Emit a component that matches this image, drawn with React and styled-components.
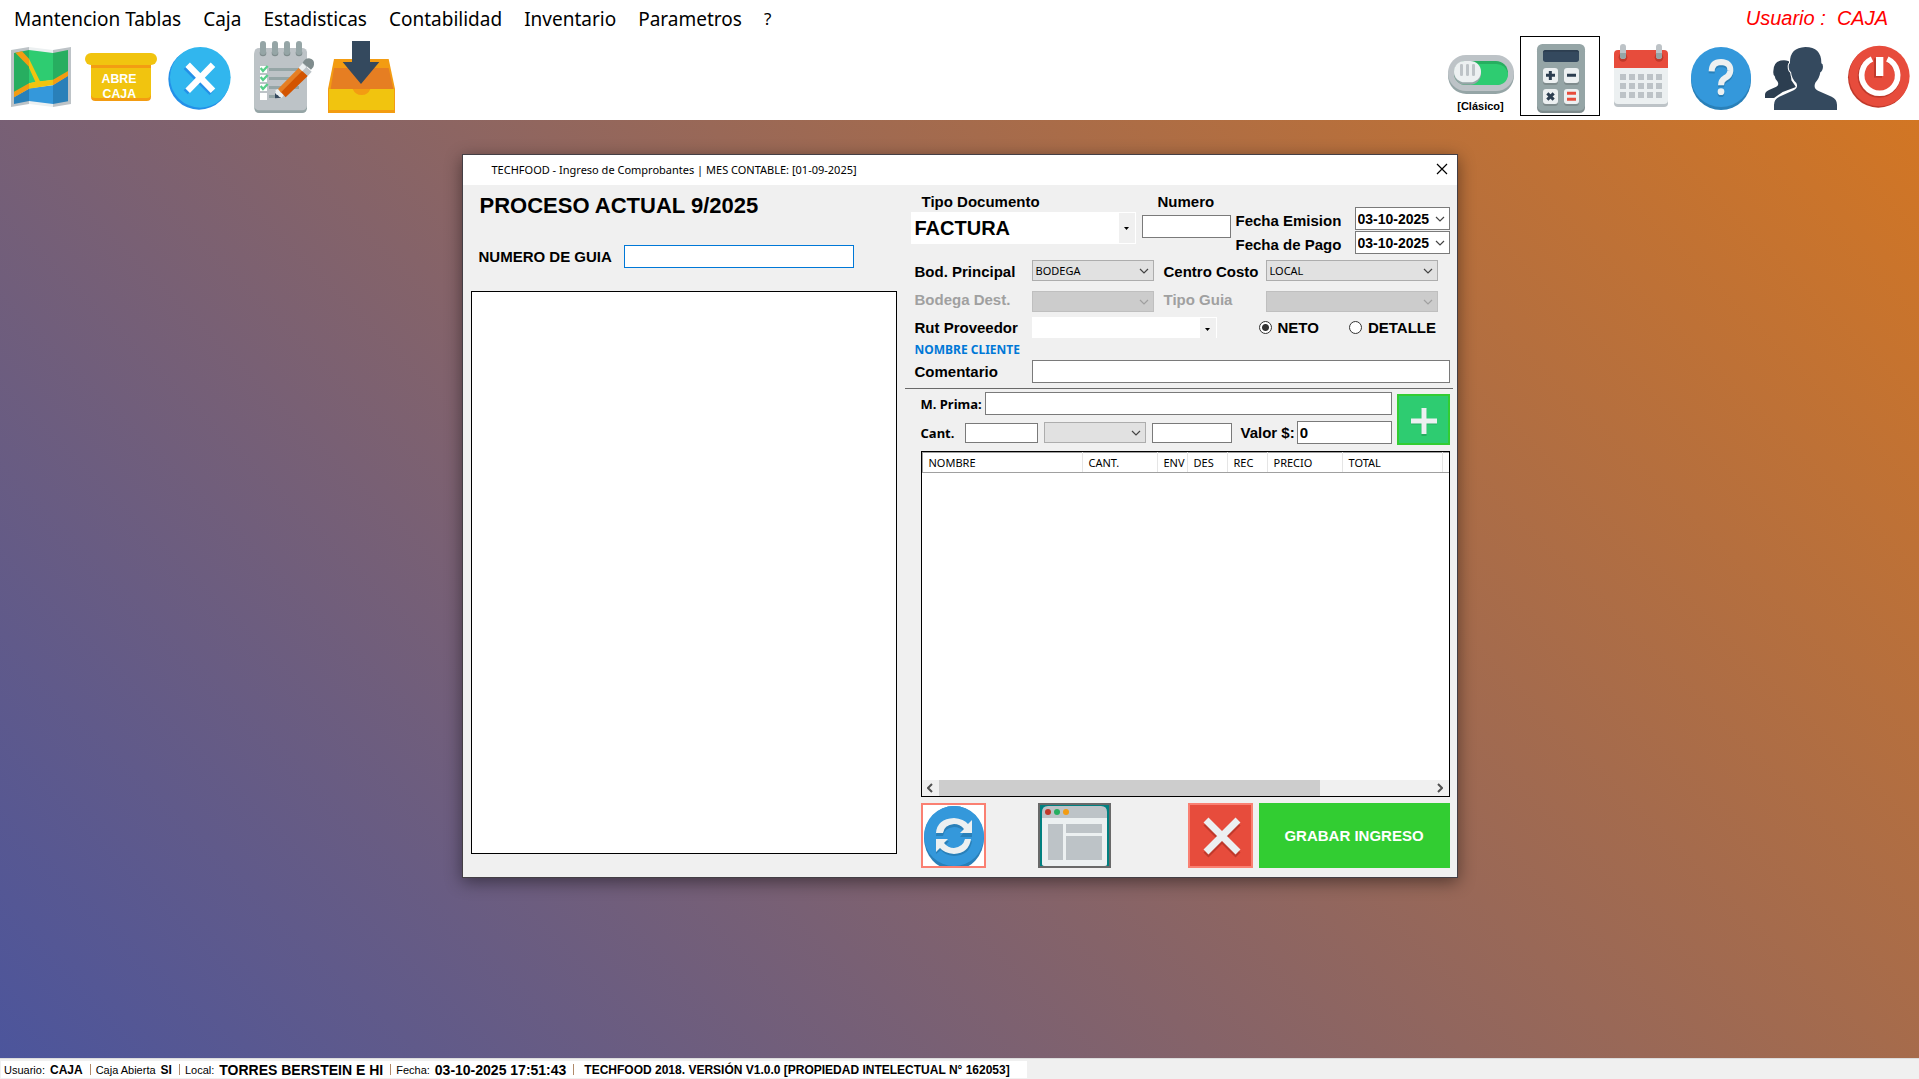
import React, {useState} from 'react';
import styled, {createGlobalStyle} from 'styled-components';

const GlobalStyle = createGlobalStyle`
  * {
    box-sizing: border-box;
  }

  html, body, #root {
    height: 100%;
    margin: 0;
  }

  body {
    font-family: 'Liberation Sans', Arial, sans-serif;
    font-size: 15px;
    color: #000;
  }

  button, input, select {
    font: inherit;
    color: inherit;
    margin: 0;
    padding: 0;
    border-radius: 0;
  }
`;

const tahoma = `'Noto Sans', Tahoma, sans-serif`;

const Page = styled.div`
  min-height: 100%;
  display: flex;
  flex-direction: column;
`;

const Header = styled.header`
  background: #fff;
  height: 120px;
`;

const MenuBar = styled.div`
  display: flex;
  justify-content: space-between;
  height: 36px;
  padding: 0 31px 0 14px;
`;

const Menu = styled.nav`
  display: flex;
  gap: 22px;
`;

const MenuItem = styled.button`
  border: 0;
  background: none;
  font-family: ${tahoma};
  font-size: ${props => (props.$small ? 17 : 19)}px;
  line-height: 36px;
  height: 38px;
`;

const CurrentUser = styled.span`
  color: #f00;
  font-size: 20px;
  font-style: italic;
  line-height: 36px;
  white-space: pre;
`;

const ToolBar = styled.div`
  display: flex;
  justify-content: space-between;
  padding-left: 8px;
`;

const ToolGroup = styled.div`
  display: flex;
`;

const Tool = styled.button`
  display: flex;
  flex-direction: column;
  align-items: center;
  justify-content: center;
  height: 80px;
  border: ${props => (props.$framed ? '1px solid #000' : '0')};
  background: none;
  font-size: 11px;
  font-weight: bold;
  line-height: 20px;

  & svg {
    display: block;
  }
`;

const Desktop = styled.main`
  flex: 1;
  display: flex;
  justify-content: center;
  align-items: flex-start;
  padding: 34px 16px;
  background: linear-gradient(45deg, #4c559c, #d27624);
`;

const Dialog = styled.section`
  width: 996px;
  max-width: 100%;
  background: #f0f0f0;
  border: 1px solid #443f45;
  box-shadow: 0 4px 16px rgba(0, 0, 0, 0.45);
`;

const TitleBar = styled.div`
  display: flex;
  justify-content: space-between;
  align-items: center;
  height: 30px;
  padding: 0 8px 2px 29px;
  background: #fff;
  font-family: ${tahoma};
  font-size: 11px;
`;

const CloseButton = styled.button`
  display: flex;
  border: 0;
  background: none;
`;

const DialogBody = styled.form`
  display: flex;
  gap: 8px;
  padding: 0 4px 0 8px;
`;

const LeftSide = styled.div`
  flex: 1;
  display: flex;
  flex-direction: column;
  padding-bottom: 23px;
`;

const Heading = styled.h1`
  margin: 8px 0 0 9px;
  font-size: 22px;
  line-height: 26px;
`;

const GuideRow = styled.div`
  display: flex;
  align-items: center;
  gap: 12px;
  margin: 26px 0 23px 8px;
`;

const GuideList = styled.div`
  flex: 1;
  border: 1px solid #000;
  background: #fff;
`;

const RightSide = styled.div`
  flex: 0 0 548px;
  min-width: 0;
`;

const Label = styled.label`
  font-size: 15px;
  font-weight: bold;
  line-height: 18px;
  white-space: nowrap;
  color: ${props => (props.$muted ? '#a0a0a0' : '#000')};
`;

const SmallLabel = styled(Label)`
  font-family: ${tahoma};
  font-size: 13px;
`;

const TextBox = styled.input`
  width: ${props => (props.$width ? `${props.$width}px` : '0')};
  flex: ${props => (props.$width ? 'none' : '1')};
  min-width: 0;
  height: ${props => (props.$low ? 20 : 23)}px;
  border: 1px solid ${props => (props.$active ? '#0078d7' : '#7a7a7a')};
  padding: 0 2px;
  background: #fff;
  font-weight: bold;
  outline: none;
`;

const DocumentRow = styled.div`
  display: flex;
  padding: 8px 3px 0 6px;
`;

const Field = styled.div`
  display: flex;
  flex-direction: column;
  align-items: flex-start;
  gap: ${props => props.$gap}px;
  margin-right: ${props => props.$space}px;

  & ${Label} {
    padding-left: ${props => props.$indent}px;
  }

  & ${TextBox} {
    flex: none;
  }
`;

const Dates = styled.div`
  flex: 1;
  display: grid;
  grid-template-columns: 1fr 95px;
  grid-auto-rows: 23px;
  row-gap: 1px;
  align-items: end;
  justify-items: start;
  padding-top: 14px;
`;

const DateBox = styled.div`
  display: flex;
  align-items: center;
  width: 95px;
  height: 23px;
  padding-left: 2px;
  border: 1px solid #7a7a7a;
  background: #fff;

  & input {
    width: 76px;
    height: 20px;
    border: 0;
    background: none;
    font-size: 14px;
    font-weight: bold;
    outline: none;
  }

  & button {
    display: flex;
    border: 0;
    background: none;
    color: #444;
  }
`;

const SelectBox = styled.div`
  display: grid;
  align-items: center;
  width: ${props => props.$width}px;
  height: 21px;
  border: 1px solid ${props => (props.$off ? '#bfbfbf' : '#adadad')};
  background: ${props => (props.$off ? '#ccc' : '#e1e1e1')};
  color: ${props => (props.$off ? '#a0a0a0' : '#444')};

  & > * {
    grid-area: 1 / 1;
  }

  & select {
    appearance: none;
    width: 100%;
    height: 19px;
    padding-left: 3px;
    border: 0;
    background: none;
    color: #000;
    font-family: ${tahoma};
    font-size: 11px;
    outline: none;
  }

  & svg {
    justify-self: end;
    margin-right: 3px;
    pointer-events: none;
  }
`;

const FlatSelect = styled.div`
  display: grid;
  grid-template-columns: 1fr 16px;
  width: ${props => props.$width}px;
  height: ${props => (props.$large ? 32 : 21)}px;
  padding: 1px;
  background: #fff;

  & select {
    grid-area: 1 / 1 / 2 / 3;
    appearance: none;
    padding-left: 3px;
    border: 0;
    background: none;
    font-size: 20px;
    font-weight: bold;
    outline: none;
  }

  & span {
    grid-area: 1 / 2;
    display: flex;
    align-items: center;
    justify-content: center;
    background: #f0f0f0;
    pointer-events: none;
  }
`;

const FieldGrid = styled.div`
  display: flex;
  flex-direction: column;
  padding: 6px 3px 5px 10px;
`;

const GridRow = styled.div`
  display: grid;
  grid-template-columns: 117px 132px 102px 1fr;
  align-items: ${props => props.$align || 'center'};
  margin-bottom: ${props => props.$space || 0}px;
`;

const SupplierRow = styled.div`
  display: flex;
  align-items: center;

  & > ${Label}:first-child {
    width: 117px;
  }
`;

const Radios = styled.div`
  display: flex;
  gap: 30px;
  margin-left: 42px;
`;

const RadioLabel = styled(Label)`
  display: flex;
  align-items: center;
  gap: 6px;

  & input {
    appearance: none;
    width: 13px;
    height: 13px;
    border: 1px solid #333;
    border-radius: 50%;
    background: #fff;
  }

  & input:checked {
    background: radial-gradient(circle, #333 0 3px, #fff 4px);
  }
`;

const ClientName = styled.div`
  height: 22px;
  color: #0078d7;
  font-family: ${tahoma};
  font-size: 12px;
  font-weight: bold;
  line-height: 24px;
`;

const Divider = styled.hr`
  height: 1px;
  margin: 0;
  border: 0;
  background: #696969;
`;

const Details = styled.div`
  padding: 3px 3px 9px 16px;
`;

const EntryArea = styled.div`
  display: flex;
  align-items: flex-start;
  gap: 5px;
  margin-bottom: 6px;
`;

const EntryRows = styled.div`
  flex: 1;
  display: flex;
  flex-direction: column;
  gap: 6px;
  min-width: 0;
`;

const EntryRow = styled.div`
  display: flex;
  align-items: center;
  gap: ${props => props.$gap}px;
`;

const PriceField = styled.div`
  flex: 1;
  display: flex;
  align-items: center;
  gap: 2px;
  min-width: 0;
  padding-left: 3px;
`;

const ItemLabel = styled(SmallLabel)`
  width: ${props => props.$width}px;
`;

const AddButton = styled.button`
  display: flex;
  width: 53px;
  height: 51px;
  margin-top: 2px;
  border: 2px solid #32cd32;
  background: #2ecc71;
`;

const ItemList = styled.div`
  display: flex;
  flex-direction: column;
  height: 346px;
  border: 1px solid #000;
  background: #fff;
`;

const ItemTable = styled.table`
  width: 100%;
  table-layout: fixed;
  border-collapse: collapse;
  border-top: 1px solid #a0a0a0;
  border-left: 1px solid #a0a0a0;
  font-family: ${tahoma};
  font-size: 11px;

  & th {
    height: 20px;
    padding: 0 0 0 6px;
    border-right: 1px solid #e5e5e5;
    border-bottom: 1px solid #a0a0a0;
    font-weight: normal;
    text-align: left;
    white-space: nowrap;
  }

  & th:last-child {
    padding: 0;
    border-right: 0;
  }
`;

const ScrollBar = styled.div`
  display: grid;
  grid-template-columns: 17px 381px 1fr 17px;
  height: 16px;
  margin-top: auto;
  background: #f0f0f0;

  & button {
    display: flex;
    align-items: center;
    justify-content: center;
    border: 0;
    background: none;
  }
`;

const ScrollThumb = styled.div`
  background: #cdcdcd;
`;

const ScrollTrack = styled.div`
  background: #f0f0f0;
`;

const Actions = styled.div`
  display: flex;
  justify-content: space-between;
  margin-top: 6px;
`;

const ActionPair = styled.div`
  display: flex;
  gap: ${props => props.$gap}px;
`;

const ActionButton = styled.button`
  display: flex;
  width: ${props => props.$width}px;
  height: 65px;
  border: 2px solid ${props => props.$line};
  background: ${props => props.$fill};
`;

const SaveButton = styled.button`
  width: 191px;
  height: 65px;
  border: 0;
  background: #32cd32;
  color: #fff;
  font-weight: bold;
`;

const StatusBar = styled.footer`
  height: 21px;
  padding: 2px 0 1px 1px;
  border-top: 1px solid #dcdcdc;
  background: #f0f0f0;
`;

const StatusText = styled.div`
  display: flex;
  width: max-content;
  height: 17px;
  padding: 0 10px 0 3px;
  background: #fff;
  font-size: 11px;
  line-height: 18px;
  white-space: pre;
`;

const StatusValue = styled.strong`
  padding: 0 7px 0 5px;
  font-size: ${props => (props.$small ? 12 : 14)}px;
`;

const StatusMark = styled.span`
  width: 1px;
  height: 11px;
  margin: 3px 5px 0 0;
  background: #b08a6a;
`;

const Chevron = () => (
  <svg width="12" height="8" viewBox="0 0 12 8" fill="none" stroke="currentColor" strokeWidth="1.2">
    <path d="M2 2l4 4 4-4" />
  </svg>
);

const Caret = () => (
  <svg width="5" height="3" viewBox="0 0 5 3">
    <path d="M0 0h5L2.5 3z" />
  </svg>
);

const MapIcon = () => (
  <svg width="70" height="80" viewBox="24 108 210 240">
    <path fill="#bdc3c7" d="M33 150l54-9v171l-54 9zM159 150l54-9v171l-54 9z" />
    <path fill="#ecf0f1" d="M87 141l72 9v171l-72-9z" />
    <path fill="#27ae60" d="M42 159l45-9v114l-45 27zM159 159l45-9v66l-45 28z" />
    <path fill="#2ecc71" d="M87 150l72 9v81l-72 10z" />
    <path fill="#2980b9" d="M42 292l45-26v37l-45 9zM159 255l45-28v77l-45 8z" />
    <path fill="#3498db" d="M87 265l72-9v56l-72-9z" />
    <path fill="#f39c12" d="M46 158l20-4 21 22v24zM42 275l45-25v16l-45 26zM159 239l45-26v15l-45 28z" />
    <path fill="#f1c40f" d="M87 176l33 68 39-5v16l-72 11v-16l19-5-19-42z" />
  </svg>
);

const CashBoxIcon = () => (
  <svg width="84" height="80" viewBox="234 108 252 240">
    <path fill="#f39c12" d="M273 190h180v100q0 13-13 13H286q-13 0-13-13z" />
    <path fill="#f1c40f" d="M273 204h180v78q0 12-13 12H286q-13 0-13-12z" />
    <rect x="255" y="159" width="216" height="36" rx="18" fill="#f1c40f" />
    <g fill="#fff" fontFamily="Liberation Sans, Arial, sans-serif" fontWeight="bold" fontSize="37" textAnchor="middle">
      <text x="357" y="249">ABRE</text>
      <text x="358" y="294">CAJA</text>
    </g>
  </svg>
);

const CancelIcon = () => (
  <svg width="80" height="80" viewBox="486 108 240 240">
    <circle cx="597" cy="237" r="92" fill="#2490e8" />
    <circle cx="601" cy="232" r="91" fill="#31b6ee" />
    <path stroke="#2490e8" strokeWidth="17" d="M557 201l78 78M633 201l-76 76" />
    <path stroke="#fff" strokeWidth="19" d="M563 194l76 78M639 194l-76 78" />
  </svg>
);

const NotepadIcon = () => (
  <svg width="80" height="80" viewBox="726 108 240 240">
    <rect x="763" y="150" width="158" height="189" rx="14" fill="#95a5a6" />
    <rect x="763" y="144" width="158" height="187" rx="14" fill="#bdc3c7" />
    {[789, 825, 861, 897].map(x => (
      <g key={x}>
        <circle cx={x} cy="159" r="10" fill="#7f8c8d" />
        <rect x={x - 9} y="123" width="18" height="42" rx="9" fill="#95a5a6" />
      </g>
    ))}
    {[198, 225, 252, 279].map((y, i) => (
      <g key={y}>
        <rect x="780" y={y} width="21" height="21" fill="#fff" />
        {i < 3 && <path fill="none" stroke="#58cf89" strokeWidth="7" d={`M782 ${y + 6}l7 9 14-15`} />}
        <rect x="807" y={y + 6} width={i === 3 ? 24 : 90} height="9" fill="#95a5a6" />
      </g>
    ))}
    <path fill="#34495e" d="M825 273l20 20-20 2z" />
    <path fill="#ecf0f1" d="M827 270l9-4 17 17-8 11q-10-3-11-8-6-2-9-8z" />
    <path fill="#e67e22" d="M834 267l64-65 10 10-65 66z" />
    <path fill="#d35400" d="M843 277l65-66 16 16-67 65z" />
    <path fill="#bdc3c7" d="M896 203l12-13 27 25-12 13z" />
    <path fill="#ecf0f1" d="M896 203l12-13 11 11-12 13z" />
    <path fill="#7f8c8d" d="M908 188q7-13 19-13 17 2 15 19 0 8-9 15z" />
  </svg>
);

const InboxIcon = () => (
  <svg width="80" height="80" viewBox="966 108 240 240">
    <path fill="#f39c12" d="M1002 177h164l19 90v72H984v-72z" />
    <path fill="#e67e22" d="M1002 204h164l14 63H992z" />
    <path fill="#f1c40f" d="M987 267h71q8 18 27 18t26-18h71v63H987z" />
    <path fill="#34495e" d="M1056 123h54v63h28l-55 66-55-66h28z" />
  </svg>
);

const ToggleIcon = () => (
  <svg width="79" height="60" viewBox="63 108 237 180">
    <rect x="84" y="171" width="198" height="111" rx="55" fill="#95a5a6" />
    <rect x="84" y="165" width="198" height="108" rx="54" fill="#bdc3c7" />
    <rect x="102" y="183" width="162" height="72" rx="36" fill="#27ae60" />
    <path fill="#2ecc71" d="M150 192h80q26 2 34 27 0 36-36 36h-78z" />
    <rect x="102" y="188" width="81" height="66" rx="33" fill="#95a5a6" />
    <rect x="102" y="183" width="81" height="64" rx="32" fill="#ecf0f1" />
    {[120, 138, 156].map(x => (
      <rect key={x} x={x} y="192" width="9" height="36" rx="4" fill="#bdc3c7" />
    ))}
  </svg>
);

const CalculatorIcon = () => (
  <svg width="78" height="78" viewBox="303 111 234 234">
    <rect x="351" y="138" width="144" height="201" rx="16" fill="#7f8c8d" />
    <rect x="351" y="132" width="144" height="200" rx="16" fill="#95a5a6" />
    <rect x="369" y="150" width="108" height="36" rx="8" fill="#34495e" />
    <path fill="#2c3e50" d="M369 158q0-8 8-8h92q8 0 8 8-4-3-8-3h-92q-4 0-8 3z" />
    {[[369, 204], [432, 204], [369, 267], [432, 267]].map(([x, y]) => (
      <g key={`${x}-${y}`}>
        <rect x={x} y={y + 6} width="45" height="45" rx="9" fill="#7f8c8d" />
        <rect x={x} y={y} width="45" height="45" rx="9" fill="#ecf0f1" />
      </g>
    ))}
    <path stroke="#2c3e50" strokeWidth="9" d="M378 226h27M391 213v27M441 226h27M382 280l19 19M401 280l-19 19" />
    <path stroke="#e74c3c" strokeWidth="9" d="M441 280h27M441 298h27" />
  </svg>
);

const CalendarIcon = () => (
  <svg width="82" height="80" viewBox="540 108 246 240">
    <rect x="582" y="170" width="162" height="151" rx="12" fill="#bdc3c7" />
    <rect x="582" y="160" width="162" height="152" rx="12" fill="#ecf0f1" />
    <path fill="#e74c3c" d="M582 204v-42q0-12 12-12h138q12 0 12 12v42z" />
    {[609, 717].map(x => (
      <g key={x}>
        <circle cx={x} cy="172" r="13" fill="#c0392b" />
        <rect x={x - 9} y="132" width="18" height="45" rx="9" fill="#bdc3c7" />
        <path fill="#95a5a6" d={`M${x - 9} 159h18v9q0 9-9 9t-9-9z`} />
      </g>
    ))}
    {[222, 249, 276].map(y =>
      [600, 627, 654, 681, 708].map(x => (
        <rect key={`${x}-${y}`} x={x} y={y} width="18" height="18" fill="#bdc3c7" />
      ))
    )}
  </svg>
);

const HelpIcon = () => (
  <svg width="78" height="80" viewBox="786 108 234 240">
    <circle cx="903" cy="240" r="90" fill="#2980b9" />
    <circle cx="903" cy="231" r="90" fill="#3498db" />
    <path fill="none" stroke="#2980b9" strokeWidth="18" d="M875 220q1-28 28-28 29 1 28 26-1 14-16 22-12 7-12 22" />
    <circle cx="903" cy="281" r="10" fill="#2980b9" />
    <path fill="none" stroke="#ecf0f1" strokeWidth="18" d="M875 214q1-28 28-28 29 1 28 26-1 14-16 22-12 7-12 22" />
    <circle cx="903" cy="275" r="10" fill="#ecf0f1" />
  </svg>
);

const UsersIcon = () => (
  <svg width="82" height="80" viewBox="1020 108 246 240">
    <path
      fill="#2c3e50"
      d="M1035 294v-10q0-9 12-14l22-10q9-4 4-15-8-7-9-17-5-3-4-14 0-33 32-33 14 0 22 10v50l14 20-40 15-26 18z"
    />
    <path
      fill="#34495e"
      stroke="#fff"
      strokeWidth="6"
      paintOrder="stroke"
      d="M1062 330v-15q0-18 16-25l43-19q15-8 8-22-14-12-16-33-7-3-7-18 0-7 4-8-2-47 46-49 49 1 48 49 5 1 5 10-1 13-8 17-3 19-15 31-7 18 8 24l41 18q16 8 16 24v16z"
    />
  </svg>
);

const PowerIcon = () => (
  <svg width="77" height="80" viewBox="1266 108 231 240">
    <circle cx="1375" cy="232" r="91" fill="#c0392b" />
    <circle cx="1378" cy="228" r="91" fill="#e74c3c" />
    <path fill="none" stroke="#c0392b" strokeWidth="16" d="M1350 180a56 56 0 1 0 54 0" />
    <path fill="none" stroke="#fff" strokeWidth="17" d="M1356 177a54 54 0 1 0 46 0" />
    <rect x="1362" y="175" width="24" height="58" fill="#c0392b" />
    <rect x="1368" y="171" width="22" height="57" fill="#fff" />
  </svg>
);

const CloseIcon = () => (
  <svg width="14" height="14" viewBox="0 0 14 14" stroke="#000" strokeWidth="1.2">
    <path d="M2 2l10 10M12 2L2 12" />
  </svg>
);

const PlusIcon = () => (
  <svg width="49" height="47" viewBox="0 0 49 47" strokeWidth="5">
    <path stroke="#27ae60" d="M12 26h26M25 13v27" />
    <path stroke="#ecf0f1" d="M12 25h26M25 12v26" />
  </svg>
);

const RefreshIcon = () => (
  <svg width="61" height="61" viewBox="0 0 61 61">
    <ellipse cx="31" cy="33" rx="30" ry="32" fill="#2980b9" />
    <ellipse cx="31" cy="31" rx="30" ry="30" fill="#3498db" />
    <g fill="#2980b9">
      <path d="M13 31q1-14 18-15 10 1 14 6l4-3v13H37l4-5q-4-5-10-5-10 1-11 9zM49 36q-2 14-18 15-10-1-13-6l-5 4V36h13l-4 5q3 5 9 5 10-1 11-10z" />
    </g>
    <g fill="#ecf0f1">
      <path d="M13 28q1-14 18-15 10 1 14 6l4-4v13H37l4-4q-4-5-10-5-10 1-11 9zM48 34q-2 14-17 15-10-1-14-6l-4 4V34h12l-4 4q4 5 10 5 9-1 11-9z" />
    </g>
  </svg>
);

const WindowIcon = () => (
  <svg width="69" height="61" viewBox="0 0 69 61">
    <path fill="#bdc3c7" d="M2 60V7q0-6 6-6h53q6 0 6 6v53q0 1-3 1H4z" />
    <path fill="#ecf0f1" d="M2 13h65v45q0 3-3 3H5q-3 0-3-3z" />
    <circle cx="8" cy="7" r="3" fill="#c0392b" />
    <circle cx="17" cy="7" r="3" fill="#27ae60" />
    <circle cx="26" cy="7" r="3" fill="#f39c12" />
    <path fill="#bdc3c7" d="M8 19h15v36H8zM26 19h36v9H26zM26 31h36v24H26z" />
  </svg>
);

const CrossIcon = () => (
  <svg width="61" height="61" viewBox="0 0 61 61" strokeWidth="7">
    <path stroke="#c0392b" d="M16 18l32 32M48 18L16 50" />
    <path stroke="#ecf0f1" d="M16 15l32 32M48 15L16 47" />
  </svg>
);

const menuItems = ['Mantencion Tablas', 'Caja', 'Estadisticas', 'Contabilidad', 'Inventario', 'Parametros'];

const columns = [
  {name: 'NOMBRE', width: 160},
  {name: 'CANT.', width: 75},
  {name: 'ENV', width: 30},
  {name: 'DES', width: 40},
  {name: 'REC', width: 40},
  {name: 'PRECIO', width: 75},
  {name: 'TOTAL', width: 100},
  {name: '', width: 7},
];

const Combo = ({id, width, value = '', disabled, label}) => (
  <SelectBox $width={width} $off={disabled}>
    <select id={id} disabled={disabled} aria-label={label}>
      <option>{value}</option>
    </select>
    <Chevron />
  </SelectBox>
);

const DatePicker = ({id}) => (
  <DateBox>
    <input id={id} defaultValue="03-10-2025" />
    <button type="button" aria-label="Abrir calendario">
      <Chevron />
    </button>
  </DateBox>
);

const TopBar = () => (
  <Header>
    <MenuBar>
      <Menu>
        {menuItems.map(item => (
          <MenuItem key={item}>{item}</MenuItem>
        ))}
        <MenuItem $small>?</MenuItem>
      </Menu>
      <CurrentUser>{'Usuario :  CAJA'}</CurrentUser>
    </MenuBar>
    <ToolBar>
      <ToolGroup>
        <Tool aria-label="Mapa"><MapIcon /></Tool>
        <Tool><CashBoxIcon /></Tool>
        <Tool aria-label="Cerrar caja"><CancelIcon /></Tool>
        <Tool aria-label="Pedidos"><NotepadIcon /></Tool>
        <Tool aria-label="Ingresos"><InboxIcon /></Tool>
      </ToolGroup>
      <ToolGroup>
        <Tool><ToggleIcon />[Clásico]</Tool>
        <Tool $framed aria-label="Calculadora"><CalculatorIcon /></Tool>
        <Tool aria-label="Calendario"><CalendarIcon /></Tool>
        <Tool aria-label="Ayuda"><HelpIcon /></Tool>
        <Tool aria-label="Usuarios"><UsersIcon /></Tool>
        <Tool aria-label="Salir"><PowerIcon /></Tool>
      </ToolGroup>
    </ToolBar>
  </Header>
);

const DocumentFields = () => {
  const [mode, setMode] = useState('NETO');

  return (
    <>
      <DocumentRow>
        <Field $gap={1} $indent={11} $space={6}>
          <Label htmlFor="tipo">Tipo Documento</Label>
          <FlatSelect $width={225} $large>
            <select id="tipo">
              <option>FACTURA</option>
            </select>
            <span><Caret /></span>
          </FlatSelect>
        </Field>
        <Field $gap={4} $indent={16} $space={5}>
          <Label htmlFor="numero">Numero</Label>
          <TextBox id="numero" $width={89} />
        </Field>
        <Dates>
          <Label htmlFor="emision">Fecha Emision</Label>
          <DatePicker id="emision" />
          <Label htmlFor="pago">Fecha de Pago</Label>
          <DatePicker id="pago" />
        </Dates>
      </DocumentRow>
      <FieldGrid>
        <GridRow $align="end" $space={10}>
          <Label htmlFor="bodega">Bod. Principal</Label>
          <Combo id="bodega" width={122} value="BODEGA" />
          <Label htmlFor="centro">Centro Costo</Label>
          <Combo id="centro" width={172} value="LOCAL" />
        </GridRow>
        <GridRow $align="start" $space={5}>
          <Label htmlFor="destino" $muted>Bodega Dest.</Label>
          <Combo id="destino" width={122} disabled />
          <Label htmlFor="guia" $muted>Tipo Guia</Label>
          <Combo id="guia" width={172} disabled />
        </GridRow>
        <SupplierRow>
          <Label htmlFor="rut">Rut Proveedor</Label>
          <FlatSelect $width={185}>
            <select id="rut" />
            <span><Caret /></span>
          </FlatSelect>
          <Radios>
            {['NETO', 'DETALLE'].map(item => (
              <RadioLabel key={item}>
                <input type="radio" name="modo" checked={mode === item} onChange={() => setMode(item)} />
                {item}
              </RadioLabel>
            ))}
          </Radios>
        </SupplierRow>
        <ClientName>NOMBRE CLIENTE</ClientName>
        <SupplierRow>
          <Label htmlFor="comentario">Comentario</Label>
          <TextBox id="comentario" />
        </SupplierRow>
      </FieldGrid>
    </>
  );
};

const ItemEntry = () => (
  <EntryArea>
    <EntryRows>
      <EntryRow $gap={0}>
        <ItemLabel htmlFor="prima" $width={64}>M. Prima:</ItemLabel>
        <TextBox id="prima" />
      </EntryRow>
      <EntryRow $gap={6}>
        <ItemLabel htmlFor="cantidad" $width={38}>Cant.</ItemLabel>
        <TextBox id="cantidad" $width={73} $low />
        <Combo width={102} label="Unidad" />
        <TextBox aria-label="Equivalencia" $width={80} $low />
        <PriceField>
          <Label htmlFor="valor">Valor $:</Label>
          <TextBox id="valor" defaultValue="0" />
        </PriceField>
      </EntryRow>
    </EntryRows>
    <AddButton type="button" aria-label="Agregar"><PlusIcon /></AddButton>
  </EntryArea>
);

const Items = () => (
  <ItemList>
    <ItemTable>
      <colgroup>
        {columns.map(column => (
          <col key={column.name} width={column.width} />
        ))}
      </colgroup>
      <thead>
        <tr>
          {columns.map(column => (
            <th key={column.name}>{column.name}</th>
          ))}
        </tr>
      </thead>
    </ItemTable>
    <ScrollBar>
      <button type="button" aria-label="Izquierda">
        <svg width="6" height="10" viewBox="0 0 6 10" fill="none" stroke="#505050" strokeWidth="2">
          <path d="M5 1L1 5l4 4" />
        </svg>
      </button>
      <ScrollThumb />
      <ScrollTrack />
      <button type="button" aria-label="Derecha">
        <svg width="6" height="10" viewBox="0 0 6 10" fill="none" stroke="#505050" strokeWidth="2">
          <path d="M1 1l4 4-4 4" />
        </svg>
      </button>
    </ScrollBar>
  </ItemList>
);

const VoucherDialog = () => (
  <Dialog>
    <TitleBar>
      TECHFOOD - Ingreso de Comprobantes | MES CONTABLE: [01-09-2025]
      <CloseButton aria-label="Cerrar"><CloseIcon /></CloseButton>
    </TitleBar>
    <DialogBody onSubmit={e => e.preventDefault()}>
      <LeftSide>
        <Heading>PROCESO ACTUAL 9/2025</Heading>
        <GuideRow>
          <Label htmlFor="numeroGuia">NUMERO DE GUIA</Label>
          <TextBox id="numeroGuia" $width={230} $active />
        </GuideRow>
        <GuideList />
      </LeftSide>
      <RightSide>
        <DocumentFields />
        <Divider />
        <Details>
          <ItemEntry />
          <Items />
          <Actions>
            <ActionPair $gap={52}>
              <ActionButton type="button" $width={65} $line="#fa8072" $fill="#fff" aria-label="Actualizar">
                <RefreshIcon />
              </ActionButton>
              <ActionButton type="button" $width={73} $line="#696969" $fill="#008080" aria-label="Ventana">
                <WindowIcon />
              </ActionButton>
            </ActionPair>
            <ActionPair $gap={6}>
              <ActionButton type="button" $width={65} $line="#fa8072" $fill="#e74c3c" aria-label="Cancelar">
                <CrossIcon />
              </ActionButton>
              <SaveButton>GRABAR INGRESO</SaveButton>
            </ActionPair>
          </Actions>
        </Details>
      </RightSide>
    </DialogBody>
  </Dialog>
);

const Status = () => (
  <StatusBar>
    <StatusText>
      Usuario:<StatusValue $small>CAJA</StatusValue>
      <StatusMark />Caja Abierta<StatusValue $small>SI</StatusValue>
      <StatusMark />Local:<StatusValue>TORRES BERSTEIN E HI</StatusValue>
      <StatusMark />Fecha:<StatusValue>03-10-2025 17:51:43</StatusValue>
      <StatusMark />
      <StatusValue $small>TECHFOOD 2018. VERSIÓN V1.0.0 [PROPIEDAD INTELECTUAL N° 162053]</StatusValue>
    </StatusText>
  </StatusBar>
);

const App = () => (
  <Page>
    <GlobalStyle />
    <TopBar />
    <Desktop>
      <VoucherDialog />
    </Desktop>
    <Status />
  </Page>
);

export default App;
